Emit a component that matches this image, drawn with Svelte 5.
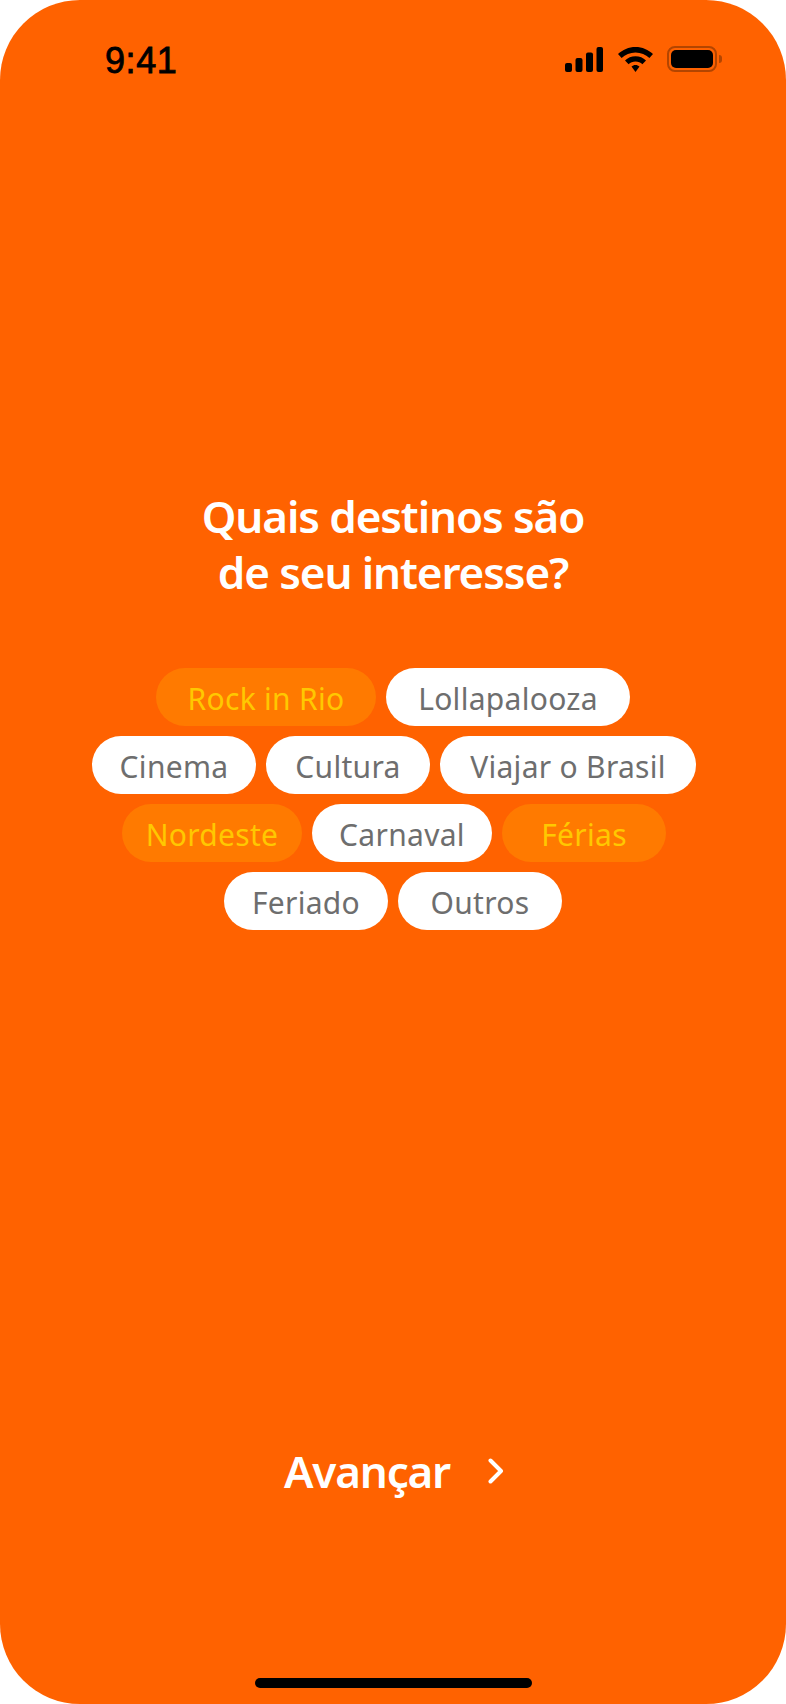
<script>
	// width comes from the design, chips are not sized by their text
	const rows = [
		[
			{ label: 'Rock in Rio', width: 220, active: true },
			{ label: 'Lollapalooza', width: 244 }
		],
		[
			{ label: 'Cinema', width: 164 },
			{ label: 'Cultura', width: 164 },
			{ label: 'Viajar o Brasil', width: 256 }
		],
		[
			{ label: 'Nordeste', width: 180, active: true },
			{ label: 'Carnaval', width: 180 },
			{ label: 'Férias', width: 164, active: true }
		],
		[
			{ label: 'Feriado', width: 164 },
			{ label: 'Outros', width: 164 }
		]
	];
</script>

<div class="screen">
	<header class="status">
		<span class="time">9:41</span>
		<div class="status-icons">
			<svg class="signal" width="38" height="25" viewBox="0 0 38 25">
				<rect x="0" y="16" width="7" height="9" rx="2" />
				<rect x="10.5" y="11" width="7" height="14" rx="2" />
				<rect x="21" y="5.5" width="7" height="19.5" rx="2" />
				<rect x="31.5" y="0" width="6.5" height="25" rx="2" />
			</svg>
			<svg width="35" height="25" viewBox="0 0 35 25">
				<path d="M17.5 0C24.3 0 30.4 2.7 35 7.1L31.4 11C27.7 7.6 22.9 5.4 17.5 5.4C12.1 5.4 7.3 7.6 3.6 11L0 7.1C4.6 2.7 10.7 0 17.5 0Z" />
				<path d="M17.5 9.2C21.6 9.2 25.2 10.8 28 13.4L24.4 17.2C22.6 15.6 20.2 14.6 17.5 14.6C14.8 14.6 12.4 15.6 10.6 17.2L7 13.4C9.8 10.8 13.4 9.2 17.5 9.2Z" />
				<path d="M17.5 18C19 18 20.4 18.6 21.5 19.6L17.5 25L13.5 19.6C14.6 18.6 16 18 17.5 18Z" />
			</svg>
			<div class="battery">
				<div class="battery-body"><div class="battery-level"></div></div>
				<div class="battery-cap"></div>
			</div>
		</div>
	</header>

	<main class="content">
		<h1>Quais destinos são<br />de seu interesse?</h1>
		<div class="chips">
			{#each rows as row}
				<div class="chip-row">
					{#each row as chip}
						<button class="chip" class:active={chip.active} style="width: {chip.width}px">
							{chip.label}
						</button>
					{/each}
				</div>
			{/each}
		</div>
	</main>

	<footer class="next">
		<span>Avançar</span>
		<svg width="16" height="26" viewBox="0 0 16 26">
			<path d="M2.5 2.5L13 13L2.5 23.5" />
		</svg>
	</footer>

	<div class="home-indicator"></div>
</div>

<style>
	:global(body) {
		background: #fff;
	}

	.screen {
		display: flex;
		flex-direction: column;
		box-sizing: border-box;
		height: 1704px;
		background: #ff6200;
		border-radius: 80px;
		font-family: 'Noto Sans', sans-serif;
		overflow: hidden;
	}

	/* Status bar */
	.status {
		display: flex;
		justify-content: space-between;
		align-items: center;
		height: 26px;
		padding: 46px 64px 0 105px;
	}

	.time {
		padding-top: 4px;
		font-family: 'Liberation Sans', sans-serif;
		font-size: 36px;
		line-height: 26px;
		letter-spacing: 0.6px;
		color: #000;
		-webkit-text-stroke: 0.8px #000;
	}

	.status-icons {
		display: flex;
		align-items: center;
		gap: 14px;
	}

	.status-icons svg {
		display: block;
		fill: #000;
	}

	.status-icons .signal {
		margin-right: 1px;
	}

	.battery {
		display: flex;
		align-items: center;
		gap: 2px;
	}

	.battery-body {
		box-sizing: border-box;
		width: 50px;
		height: 26px;
		padding: 2px;
		border: 2px solid #b34500;
		border-radius: 8px;
	}

	.battery-level {
		height: 100%;
		background: #000;
		border-radius: 5px;
	}

	.battery-cap {
		width: 3px;
		height: 8px;
		background: #b34500;
		border-radius: 0 4px 4px 0;
	}

	/* Question and chips */
	.content {
		display: flex;
		flex-direction: column;
		align-items: center;
		padding-top: 416px;
	}

	h1 {
		margin: 0;
		font-size: 44px;
		font-weight: 600;
		line-height: 56px;
		letter-spacing: -1.1px;
		text-align: center;
		color: #fff;
	}

	.chips {
		display: flex;
		flex-direction: column;
		gap: 10px;
		margin-top: 68px;
	}

	.chip-row {
		display: flex;
		justify-content: center;
		gap: 10px;
	}

	/* the two wide rows sit a pixel right of centre */
	.chip-row:nth-child(2),
	.chip-row:nth-child(3) {
		padding-left: 2px;
	}

	.chip {
		height: 58px;
		padding: 3px 0 0;
		border: 0;
		border-radius: 29px;
		background: #fff;
		color: #6e6e6e;
		font-family: inherit;
		font-size: 30px;
		letter-spacing: 0.3px;
	}

	.chip.active {
		background: #ff7a00;
		color: #ffc800;
	}

	/* Next action */
	.next {
		display: flex;
		justify-content: center;
		align-items: center;
		gap: 38px;
		margin-top: 511px;
		padding-left: 2px;
		font-size: 44px;
		font-weight: 600;
		line-height: 60px;
		letter-spacing: -1.2px;
		color: #fff;
	}

	.next svg {
		display: block;
		fill: none;
		stroke: #fff;
		stroke-width: 4;
		stroke-linecap: round;
		stroke-linejoin: round;
	}

	.home-indicator {
		align-self: center;
		width: 277px;
		height: 10px;
		margin-top: auto;
		margin-bottom: 16px;
		background: #000;
		border-radius: 5px;
	}
</style>
